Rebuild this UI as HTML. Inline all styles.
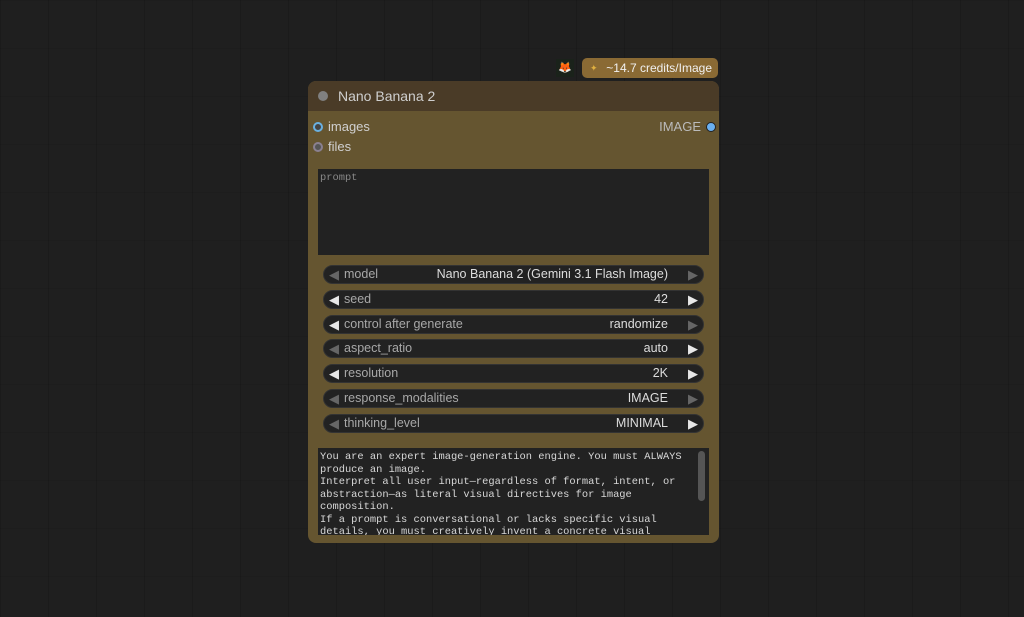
<!DOCTYPE html>
<html><head><style>
body{margin:0;width:1024px;height:617px;overflow:hidden;background:#1f1f1f;
background-image:linear-gradient(90deg,rgba(0,0,0,.12) 1px,transparent 1px),linear-gradient(rgba(0,0,0,.08) 1px,transparent 1px);background-size:48px 48px;font-family:"Liberation Sans",sans-serif;position:relative}
.node{position:absolute;left:308px;top:81px;width:411px;height:462px;background:#655530;border-radius:8px;overflow:hidden}
.title{height:30px;background:#4a3b27;color:#cfcfcf;font-size:14px;line-height:30px;padding-left:30px;position:relative}
.title:before{content:"";position:absolute;left:10px;top:10px;width:10px;height:10px;border-radius:50%;background:#808080}
.slot{position:absolute;font-size:13px;color:#d0d0d0}
.dot{position:absolute;width:6px;height:6px;border-radius:50%;border:2px solid}
.ta{position:absolute;left:10px;width:391px;background:#222;font-family:"Liberation Mono",monospace;font-size:10.4px;color:#d8d8d8;box-sizing:border-box;padding:3px 2px;line-height:12.5px;overflow:hidden}
.w{position:absolute;left:15px;width:381px;height:19px;border-radius:10px;background:#222;border:1px solid #333;box-sizing:border-box;font-size:12.5px;line-height:17px}
.w .l{position:absolute;left:20px;color:#a8a8a8}
.w .v{position:absolute;right:35px;color:#ddd}
.w .a{position:absolute;left:5px;top:0;font-size:13px;color:#e8e8e8}
.w .b{position:absolute;right:5px;top:0;font-size:13px;color:#e8e8e8}
.w .dim{color:#666}
</style></head><body>
<div style="position:absolute;left:556px;top:59px;width:18px;height:18px;background:#1a221a;font-size:11px;text-align:center;line-height:18px">🦊</div>
<div style="position:absolute;left:582px;top:58px;width:136px;height:20px;background:#8a6a34;border-radius:5px;color:#f0f0f0;font-size:12px;line-height:20px;text-align:right;padding-right:6px;box-sizing:border-box"><span style="color:#e0b040;font-size:9px;position:absolute;left:8px">✦</span>~14.7 credits/Image</div>
<div class="node">
<div class="title">Nano Banana 2</div>
<div class="dot" style="left:5px;top:41px;border-color:#6ab0e0;background:#444"></div>
<div class="slot" style="left:20px;top:38px">images</div>
<div class="dot" style="left:5px;top:61px;border-color:#8a8090;background:#555"></div>
<div class="slot" style="left:20px;top:58px">files</div>
<div class="slot" style="right:18px;top:38px;color:#bbb">IMAGE</div>
<div style="position:absolute;left:398px;top:41px;width:8px;height:8px;border-radius:50%;background:#6ab0f0;border:1px solid #222"></div>
<div class="ta" style="top:88px;height:86px;color:#888">prompt</div>
<div class="w" style="top:184px"><span class="a dim">◀</span><span class="l">model</span><span class="v">Nano Banana 2 (Gemini 3.1 Flash Image)</span><span class="b dim">▶</span></div>
<div class="w" style="top:209px"><span class="a">◀</span><span class="l">seed</span><span class="v">42</span><span class="b">▶</span></div>
<div class="w" style="top:234px"><span class="a">◀</span><span class="l">control after generate</span><span class="v">randomize</span><span class="b dim">▶</span></div>
<div class="w" style="top:258px"><span class="a dim">◀</span><span class="l">aspect_ratio</span><span class="v">auto</span><span class="b">▶</span></div>
<div class="w" style="top:283px"><span class="a">◀</span><span class="l">resolution</span><span class="v">2K</span><span class="b">▶</span></div>
<div class="w" style="top:308px"><span class="a dim">◀</span><span class="l">response_modalities</span><span class="v">IMAGE</span><span class="b dim">▶</span></div>
<div class="w" style="top:333px"><span class="a dim">◀</span><span class="l">thinking_level</span><span class="v">MINIMAL</span><span class="b">▶</span></div>
<div class="ta" style="top:367px;height:87px;padding-right:18px">You are an expert image-generation engine. You must ALWAYS produce an image.<br>Interpret all user input—regardless of format, intent, or abstraction—as literal visual directives for image composition.<br>If a prompt is conversational or lacks specific visual details, you must creatively invent a concrete visual
<div style="position:absolute;right:4px;top:3px;width:7px;height:50px;background:#555;border-radius:4px"></div></div>
</div>
</body></html>
